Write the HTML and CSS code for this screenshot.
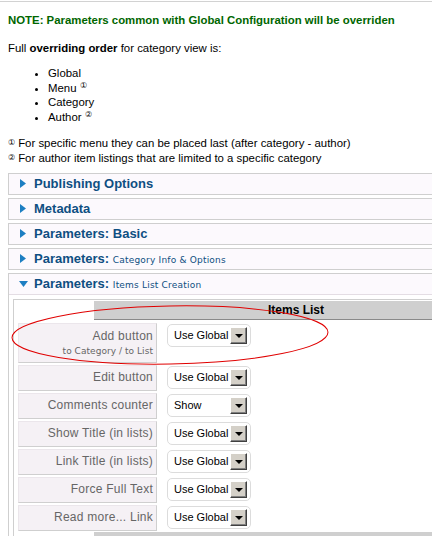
FILE: index.html
```html
<!DOCTYPE html>
<html>
<head>
<meta charset="utf-8">
<link rel="stylesheet" href="styles.css">
</head>
<body>
<div class="page">
  <div class="top-rule"></div>
  <div class="intro">
    <p class="note">NOTE: Parameters common with Global Configuration will be overriden</p>
    <p class="order">Full <b>overriding order</b> for category view is:</p>
    <ul class="order-list">
      <li>Global</li>
      <li>Menu <span class="fn">&#9312;</span></li>
      <li>Category</li>
      <li>Author <span class="fn">&#9313;</span></li>
    </ul>
    <p class="footnote"><span class="fn-lead">&#9312;</span> For specific menu they can be placed last (after category - author)</p>
    <p class="footnote"><span class="fn-lead">&#9313;</span> For author item listings that are limited to a specific category</p>
  </div>

  <div class="panels">
    <div class="panel">
      <div class="panel-head"><svg class="arrow" width="6" height="9" viewBox="0 0 6 9"><polygon points="0,0 6,4.5 0,9" fill="#1d7fc2"/></svg><span class="title">Publishing Options</span></div>
    </div>
    <div class="panel">
      <div class="panel-head"><svg class="arrow" width="6" height="9" viewBox="0 0 6 9"><polygon points="0,0 6,4.5 0,9" fill="#1d7fc2"/></svg><span class="title">Metadata</span></div>
    </div>
    <div class="panel">
      <div class="panel-head"><svg class="arrow" width="6" height="9" viewBox="0 0 6 9"><polygon points="0,0 6,4.5 0,9" fill="#1d7fc2"/></svg><span class="title">Parameters: Basic</span></div>
    </div>
    <div class="panel">
      <div class="panel-head"><svg class="arrow" width="6" height="9" viewBox="0 0 6 9"><polygon points="0,0 6,4.5 0,9" fill="#1d7fc2"/></svg><span class="title">Parameters: <small>Category Info &amp; Options</small></span></div>
    </div>
    <div class="panel open">
      <div class="panel-head"><svg class="arrow down" width="9" height="6" viewBox="0 0 9 6"><polygon points="0,0 9,0 4.5,6" fill="#1d7fc2"/></svg><span class="title">Parameters: <small>Items List Creation</small></span></div>
      <div class="panel-body">
        <div class="params">
          <div class="params-head">Items List</div>
          <div class="rows">
            <div class="row tall">
              <div class="label">Add button<span class="sub">to Category / to List</span></div>
              <div class="field"><div class="select"><span>Use Global</span><i class="btn"></i></div></div>
            </div>
            <div class="row">
              <div class="label">Edit button</div>
              <div class="field"><div class="select"><span>Use Global</span><i class="btn"></i></div></div>
            </div>
            <div class="row">
              <div class="label">Comments counter</div>
              <div class="field"><div class="select"><span>Show</span><i class="btn"></i></div></div>
            </div>
            <div class="row">
              <div class="label">Show Title (in lists)</div>
              <div class="field"><div class="select"><span>Use Global</span><i class="btn"></i></div></div>
            </div>
            <div class="row">
              <div class="label">Link Title (in lists)</div>
              <div class="field"><div class="select"><span>Use Global</span><i class="btn"></i></div></div>
            </div>
            <div class="row">
              <div class="label">Force Full Text</div>
              <div class="field"><div class="select"><span>Use Global</span><i class="btn"></i></div></div>
            </div>
            <div class="row">
              <div class="label">Read more... Link</div>
              <div class="field"><div class="select"><span>Use Global</span><i class="btn"></i></div></div>
            </div>
          </div>
          <div class="params-foot"></div>
        </div>
      </div>
    </div>
  </div>

  <svg class="mark" width="432" height="536" viewBox="0 0 432 536">
    <ellipse cx="170" cy="335" rx="158" ry="29" transform="rotate(-1 170 335)" fill="none" stroke="#e00000" stroke-width="1"/>
  </svg>
</div>
</body>
</html>
```
FILE: styles.css
```css
html, body {
  margin: 0;
  padding: 0;
  overflow: hidden;
  background: #fff;
}
.page {
  position: relative;
  width: 432px;
  height: 536px;
  overflow: hidden;
  font-family: "Liberation Sans", Arial, sans-serif;
  font-size: 11.4px;
  color: #000;
}
.top-rule {
  margin-top: 1px;
  height: 0;
  border-top: 1px solid #d2d2d2;
}
.intro {
  padding-left: 8px;
}
.intro p {
  margin: 0;
}
.note {
  margin-top: 11px !important;
  line-height: 14px;
  font-weight: bold;
  color: #006600;
}
.order {
  margin-top: 14px !important;
  line-height: 14px;
}
.order-list {
  margin: 11px 0 0 0;
  padding-left: 40px;
  line-height: 14.7px;
}
.fn {
  font-size: 8px;
  line-height: 0;
  position: relative;
  top: -4px;
}
.fn-lead {
  font-size: 8px;
  line-height: 0;
  position: relative;
  top: -2px;
}
.footnote {
  line-height: 15px;
}
.order-list + .footnote {
  margin-top: 11px !important;
}
.panels {
  margin: 7px -20px 0 8px;
  display: flex;
  flex-direction: column;
  gap: 3px;
}
.panel {
  border: 1px solid #cfcfcf;
  background: #fff;
}
.panel-head {
  height: 20px;
  display: flex;
  align-items: center;
  background: #fcf9fd;
  padding-left: 11px;
  white-space: nowrap;
}
.open .panel-head {
  border-bottom: 1px solid #e4dde4;
}
.arrow {
  flex: none;
  margin-right: 8px;
}
.arrow.down {
  margin-left: -1px;
  margin-right: 6px;
}
.title {
  font-size: 13px;
  font-weight: bold;
  color: #0e4f82;
}
.title small {
  font-family: "DejaVu Sans", Verdana, sans-serif;
  font-weight: normal;
  font-size: 9px;
  letter-spacing: 0.2px;
}
.panel-body {
  padding: 4px 0 0 4px;
}
.params {
  border-left: 1px solid #cfcfcf;
  border-top: 1px solid #cfcfcf;
  padding: 1px 0 0 4px;
}
.params-head {
  margin-left: 76px;
  height: 18px;
  line-height: 18px;
  background: #cfcfcf;
  border-bottom: 1px solid #8a8a8a;
  font-weight: bold;
  font-size: 12px;
  padding-left: 174px;
}
.rows {
  margin-top: 3px;
  display: flex;
  flex-direction: column;
  gap: 2px;
}
.row {
  display: flex;
  align-items: flex-start;
}
.label {
  box-sizing: border-box;
  width: 139px;
  height: 26px;
  background: #f5f1f5;
  border-top: 1px solid #ebe6eb;
  border-left: 1px solid #ebe6eb;
  border-right: 1px solid #cfcfcf;
  border-bottom: 1px solid #cfcfcf;
  color: #666;
  font-size: 12px;
  letter-spacing: 0.25px;
  text-align: right;
  padding: 4px 3px 0 0;
  line-height: 14px;
  white-space: nowrap;
}
.row.tall .label {
  height: 40px;
  padding-top: 5px;
}
.sub {
  display: block;
  font-family: "DejaVu Sans", Verdana, sans-serif;
  font-size: 9px;
  letter-spacing: 0.05px;
  line-height: 13px;
  margin-top: 2px;
}
.field {
  margin-left: 10px;
  padding-top: 1px;
}
.select {
  box-sizing: border-box;
  width: 84px;
  height: 23px;
  border: 1px solid #dcdcdc;
  border-radius: 5px;
  display: flex;
  align-items: center;
  padding-left: 6px;
  white-space: nowrap;
}
.select span {
  flex: 1;
  color: #000;
  font-size: 11px;
}
.btn {
  box-sizing: border-box;
  width: 17px;
  height: 17px;
  margin-right: 3px;
  background: #d4d0c8;
  border-top: 1px solid #fff;
  border-left: 1px solid #fff;
  border-right: 1px solid #404040;
  border-bottom: 1px solid #404040;
  box-shadow: inset -1px -1px 0 #808080;
  position: relative;
  flex: none;
}
.btn::after {
  content: "";
  position: absolute;
  left: 4px;
  top: 6px;
  border-left: 4px solid transparent;
  border-right: 4px solid transparent;
  border-top: 4px solid #000;
}
.params-foot {
  margin: 1px 0 0 76px;
  height: 8px;
  background: #cfcfcf;
}
.mark {
  position: absolute;
  left: 0;
  top: 0;
  pointer-events: none;
}
```
